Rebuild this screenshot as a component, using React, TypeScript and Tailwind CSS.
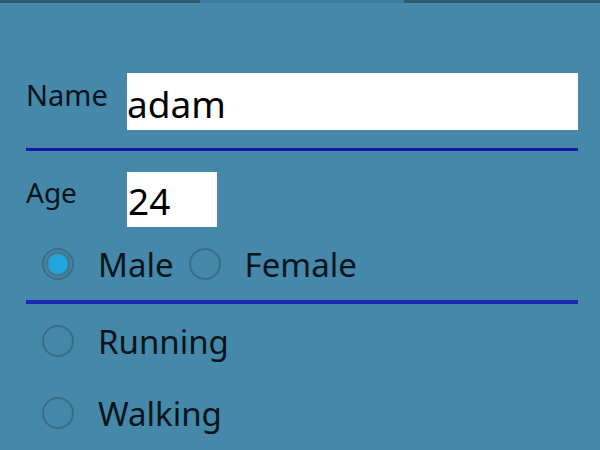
import React from "react";

function Radio({ checked }: { checked?: boolean }) {
  return (
    <svg width="34" height="34" viewBox="0 0 34 34" className="shrink-0">
      <circle cx="17" cy="17" r="15" fill="none" stroke="#3a6a82" strokeOpacity="0.9" strokeWidth="2" />
      {checked && (
        <>
          <circle cx="17" cy="17" r="11.5" fill="none" stroke="#3d7790" strokeWidth="2" />
          <circle cx="17" cy="17" r="9.5" fill="#1ea6dd" />
        </>
      )}
    </svg>
  );
}

export default function App() {
  const font = { fontFamily: '"Noto Sans", "Open Sans", sans-serif' };
  return (
    <div className="w-[600px] h-[450px] overflow-hidden bg-[#4588aa] text-[#08141a]" style={font}>
      <div className="flex h-[3px]">
        <div className="w-[200px] bg-[#2e5a70]" />
        <div className="w-[204px] bg-[#3b7ea0]" />
        <div className="flex-1 bg-[#2e5a70]" />
      </div>

      <div className="mt-[70px] flex items-start pl-[26px]">
        <div className="w-[101px] pt-[7px] text-[29px] leading-none">Name</div>
        <div className="w-[451px] h-[57px] bg-white pt-[12px] text-[37px] leading-none text-black">adam</div>
      </div>

      <div className="mt-[18px] ml-[26px] w-[552px] h-[3px] bg-[#1616aa]" />

      <div className="mt-[21px] flex items-start pl-[26px]">
        <div className="w-[101px] pt-[6px] text-[28px] leading-none">Age</div>
        <div className="w-[90px] h-[55px] bg-white pt-[10px] pl-[1px] text-[37px] leading-none text-black">24</div>
      </div>

      <div className="mt-[19px] h-[36px] flex items-center pl-[41px] text-[33px] leading-none">
        <Radio checked />
        <span className="ml-[23px]">Male</span>
        <span className="ml-[14px]"><Radio /></span>
        <span className="ml-[23px]">Female</span>
      </div>

      <div className="mt-[18px] ml-[26px] w-[552px] h-[4px] bg-[#1c26b4]" />

      <div className="mt-[19px] h-[36px] flex items-center pl-[41px] text-[33px] leading-none">
        <Radio />
        <span className="ml-[23px]">Running</span>
      </div>

      <div className="mt-[36px] h-[36px] flex items-center pl-[41px] text-[33px] leading-none">
        <Radio />
        <span className="ml-[23px]">Walking</span>
      </div>
    </div>
  );
}
